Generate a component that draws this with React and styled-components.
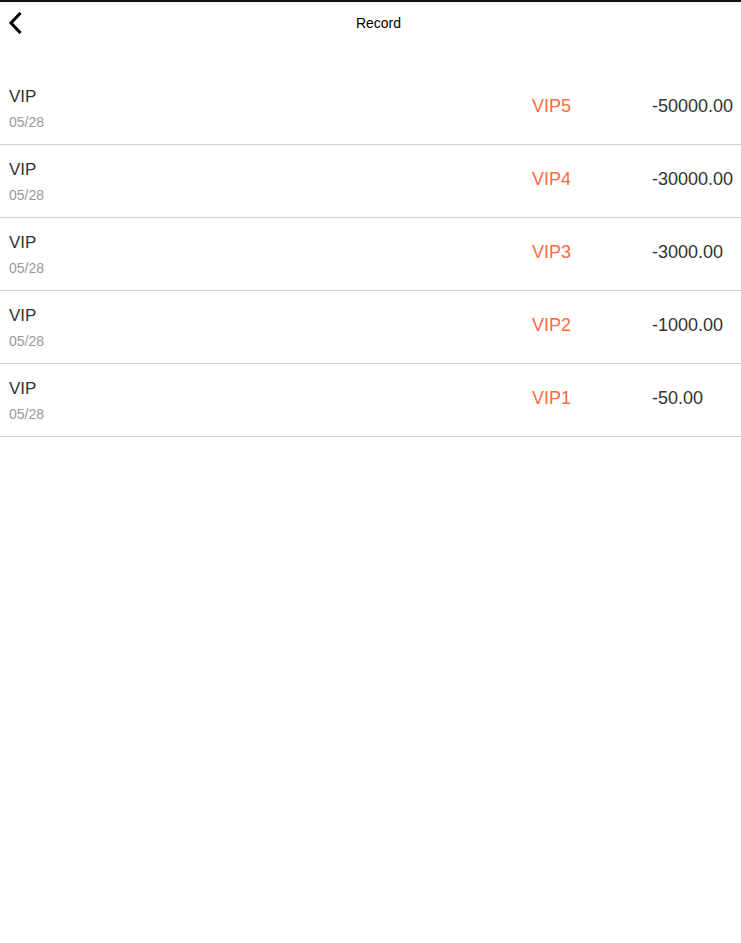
import React from 'react';
import styled, { createGlobalStyle } from 'styled-components';

const GlobalStyle = createGlobalStyle`
  html, body {
    margin: 0;
    padding: 0;
    background: #fff;
  }
  body {
    font-family: "Liberation Sans", Arial, sans-serif;
  }
`;

const Page = styled.div`
  min-height: 943px;
  border-top: 2px solid #111;
  box-sizing: border-box;
`;

const Header = styled.div`
  height: 42px;
  display: flex;
  align-items: center;
  justify-content: center;
  padding-left: 16px;
  position: relative;
`;

const BackButton = styled.button`
  position: absolute;
  left: 3px;
  top: 8px;
  width: 24px;
  height: 26px;
  border: 0;
  padding: 0;
  background: none;
  cursor: pointer;
  display: flex;
  align-items: center;
  justify-content: center;
`;

const Title = styled.div`
  font-size: 14px;
  color: #000;
`;

const List = styled.div`
  padding-top: 28px;
`;

const Row = styled.div`
  display: flex;
  align-items: center;
  height: 72px;
  border-bottom: 1px solid #cfcfcf;
  padding-left: 9px;
`;

const Info = styled.div`
  flex: 1;
  display: flex;
  flex-direction: column;
  gap: 7px;
`;

const Name = styled.div`
  font-size: 17px;
  color: #333;
`;

const Date = styled.div`
  font-size: 14px;
  color: #999;
`;

const Level = styled.div`
  width: 120px;
  font-size: 18px;
  color: #ff6a3d;
  padding-bottom: 3px;
`;

const Amount = styled.div`
  width: 89px;
  font-size: 18px;
  color: #333;
  padding-bottom: 3px;
`;

const records = [
  { level: 'VIP5', amount: '-50000.00' },
  { level: 'VIP4', amount: '-30000.00' },
  { level: 'VIP3', amount: '-3000.00' },
  { level: 'VIP2', amount: '-1000.00' },
  { level: 'VIP1', amount: '-50.00' }
];

const App = () => (
  <Page>
    <GlobalStyle />
    <Header>
      <BackButton aria-label="back">
        <svg width="14" height="22" viewBox="0 0 14 22" fill="none">
          <path d="M11.5 2 L3 11 L11.5 20" stroke="#000" strokeWidth="3" strokeLinecap="square" />
        </svg>
      </BackButton>
      <Title>Record</Title>
    </Header>
    <List>
      {records.map(r => (
        <Row key={r.level}>
          <Info>
            <Name>VIP</Name>
            <Date>05/28</Date>
          </Info>
          <Level>{r.level}</Level>
          <Amount>{r.amount}</Amount>
        </Row>
      ))}
    </List>
  </Page>
);

export default App;
